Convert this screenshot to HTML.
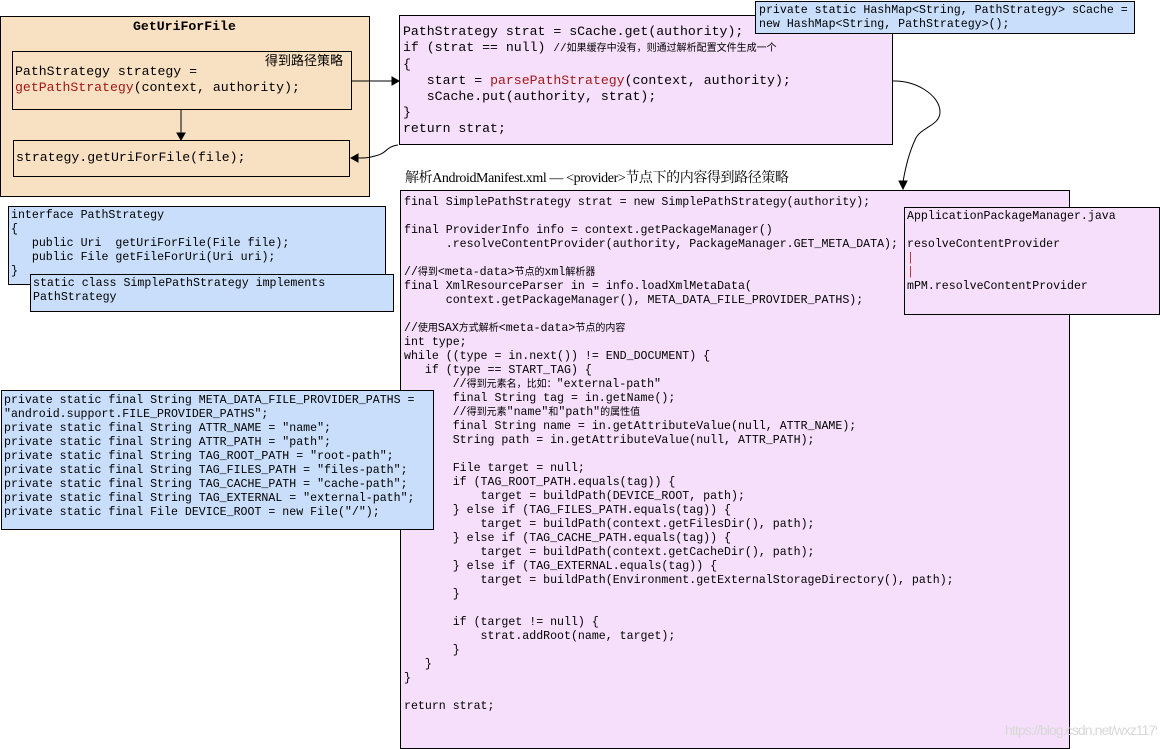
<!DOCTYPE html>
<html><head><meta charset="utf-8"><style>
*{margin:0;padding:0;box-sizing:border-box}
body{width:1160px;height:749px;background:#fff;position:relative;overflow:hidden;font-family:"Liberation Mono","Noto Sans CJK SC",monospace;color:#000}
.b{position:absolute;border:1px solid #000}
.t{position:absolute;white-space:pre;line-height:14px}
.or{background:#f8e0c2}.pk{background:#f6dffa}.bl{background:#c9defa}
.s{font-size:11.6px}
.m{font-size:13.2px;line-height:16px}
.r{color:#a01818}
.cn{font-family:"Noto Sans CJK SC",sans-serif;font-size:10px;line-height:10px}
</style></head><body>
<div class="b or" style="left:0;top:16px;width:370px;height:181px"></div>
<div class="t m" style="left:133px;top:19px;font-weight:bold">GetUriForFile</div>
<div class="b or" style="left:12px;top:51px;width:340px;height:59px"></div>
<div class="t" style="left:265px;top:52px;font-family:'Noto Sans CJK SC',sans-serif;font-size:13px;line-height:16px">得到路径策略</div>
<div class="t m" style="left:15px;top:64px">PathStrategy strategy =
<span class="r">getPathStrategy</span>(context, authority);</div>
<div class="b or" style="left:13px;top:140px;width:337px;height:37px"></div>
<div class="t m" style="left:16px;top:150px">strategy.getUriForFile(file);</div>

<div class="b pk" style="left:399px;top:15px;width:494px;height:130px"></div>
<div class="t m" style="left:403px;top:24px">PathStrategy strat = sCache.get(authority);
if (strat == null) <span style="font-size:11px">//<span class="cn">如果缓存中没有，则通过解析配置文件生成一个</span></span>
{
   start = <span class="r">parsePathStrategy</span>(context, authority);
   sCache.put(authority, strat);
}
return strat;</div>

<div class="b bl" style="left:755px;top:1px;width:380px;height:33px"></div>
<div class="t s" style="left:759px;top:4px">private static HashMap&lt;String, PathStrategy&gt; sCache =
new HashMap&lt;String, PathStrategy&gt;();</div>

<div class="t" style="left:405px;top:170px;font-family:'Liberation Serif','Noto Serif CJK SC',serif;font-size:14px;line-height:18px;letter-spacing:-0.4px">解析AndroidManifest.xml — &lt;provider&gt;节点下的内容得到路径策略</div>

<div class="b pk" style="left:400px;top:190px;width:670px;height:559px"></div>
<div class="t s" style="left:404px;top:196px">final SimplePathStrategy strat = new SimplePathStrategy(authority);

final ProviderInfo info = context.getPackageManager()
      .resolveContentProvider(authority, PackageManager.GET_META_DATA);

//<span class="cn">得到</span>&lt;meta-data&gt;<span class="cn">节点的</span>xml<span class="cn">解析器</span>
final XmlResourceParser in = info.loadXmlMetaData(
      context.getPackageManager(), META_DATA_FILE_PROVIDER_PATHS);

//<span class="cn">使用</span>SAX<span class="cn">方式解析</span>&lt;meta-data&gt;<span class="cn">节点的内容</span>
int type;
while ((type = in.next()) != END_DOCUMENT) {
   if (type == START_TAG) {
       //<span class="cn">得到元素名，比如：</span>"external-path"
       final String tag = in.getName();
       //<span class="cn">得到元素</span>"name"<span class="cn">和</span>"path"<span class="cn">的属性值</span>
       final String name = in.getAttributeValue(null, ATTR_NAME);
       String path = in.getAttributeValue(null, ATTR_PATH);

       File target = null;
       if (TAG_ROOT_PATH.equals(tag)) {
           target = buildPath(DEVICE_ROOT, path);
       } else if (TAG_FILES_PATH.equals(tag)) {
           target = buildPath(context.getFilesDir(), path);
       } else if (TAG_CACHE_PATH.equals(tag)) {
           target = buildPath(context.getCacheDir(), path);
       } else if (TAG_EXTERNAL.equals(tag)) {
           target = buildPath(Environment.getExternalStorageDirectory(), path);
       }

       if (target != null) {
           strat.addRoot(name, target);
       }
   }
}

return strat;</div>

<div class="b pk" style="left:904px;top:207px;width:256px;height:108px"></div>
<div class="t s" style="left:907px;top:210px">ApplicationPackageManager.java

resolveContentProvider
<span style="color:#c03030">|</span>
<span style="color:#c03030">|</span>
mPM.resolveContentProvider</div>

<div class="b bl" style="left:8px;top:206px;width:378px;height:79px"></div>
<div class="t s" style="left:11px;top:209px">interface PathStrategy
{
   public Uri  getUriForFile(File file);
   public File getFileForUri(Uri uri);
}</div>
<div class="b bl" style="left:30px;top:274px;width:364px;height:38px"></div>
<div class="t s" style="left:33px;top:277px">static class SimplePathStrategy implements
PathStrategy</div>

<div class="b bl" style="left:1px;top:390px;width:433px;height:140px"></div>
<div class="t s" style="left:4px;top:394px">private static final String META_DATA_FILE_PROVIDER_PATHS =
"android.support.FILE_PROVIDER_PATHS";
private static final String ATTR_NAME = "name";
private static final String ATTR_PATH = "path";
private static final String TAG_ROOT_PATH = "root-path";
private static final String TAG_FILES_PATH = "files-path";
private static final String TAG_CACHE_PATH = "cache-path";
private static final String TAG_EXTERNAL = "external-path";
private static final File DEVICE_ROOT = new File("/");</div>

<div class="t" style="left:1005px;top:720px;width:152px;overflow:hidden;font-family:'Liberation Sans',sans-serif;font-size:14px;letter-spacing:-0.9px;color:#d8d8d8;line-height:20px">https://blog.csdn.net/wxz1179503422</div>

<svg width="1160" height="749" style="position:absolute;left:0;top:0" fill="none" stroke="#000" stroke-width="1">
<path d="M181 110V134"/><path d="M177 133L181 140L185 133Z" fill="#000"/>
<path d="M352 81H392"/><path d="M392 77L399 81L392 85Z" fill="#000"/>
<path d="M398 145C385 147 388 153 375 156C368 158 365 158 357 158"/><path d="M358 154L351 158L358 162Z" fill="#000"/>
<path d="M893 81C915 80 940 95 940 112C940 126 920 127 915 140C908 155 905 170 903 182"/><path d="M899 181L903 189L907 181Z" fill="#000"/>
</svg>
</body></html>
